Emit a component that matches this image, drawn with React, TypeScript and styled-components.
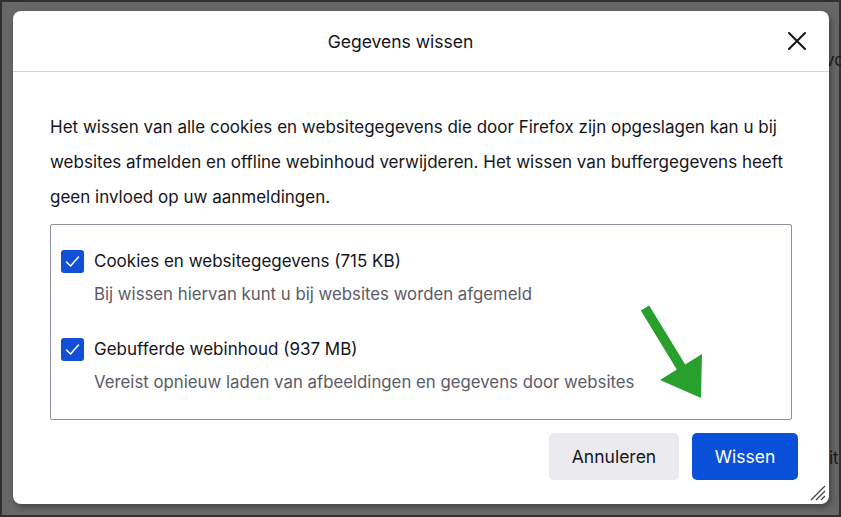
import styled, { createGlobalStyle } from 'styled-components';

const GlobalStyle = createGlobalStyle`
  html, body {
    margin: 0;
    padding: 0;
    background: #666;
  }
  * {
    box-sizing: border-box;
  }
`;

const Page = styled.div`
  position: relative;
  width: 841px;
  height: 517px;
  display: flex;
  align-items: flex-start;
  padding-left: 13px;
  background: #676767;
  box-shadow: inset 0 0 0 2px #303030;
  overflow: hidden;
  font-family: Inter, 'Liberation Sans', sans-serif;
`;

const Dialog = styled.div`
  position: relative;
  flex: 0 0 816px;
  height: 493px;
  margin-top: 11px;
  background: #fff;
  border-radius: 8px;
  box-shadow: 2px 3px 6px rgba(0, 0, 0, 0.35);
  display: flex;
  flex-direction: column;
`;

const Header = styled.div`
  flex: 0 0 61px;
  border-bottom: 1px solid #d4d4d8;
  display: grid;
  grid-template-columns: 1fr auto;
  align-items: center;
  padding: 0 17px 0 6px;
`;

const Title = styled.h1`
  margin: 0;
  font-size: 17.5px;
  font-weight: 400;
  color: #15141a;
  text-align: center;
`;

const CloseButton = styled.button`
  width: 30px;
  height: 30px;
  border: 0;
  background: none;
  padding: 0;
  display: flex;
  align-items: center;
  justify-content: center;
  color: #15141a;
`;

const Body = styled.div`
  flex: 1;
  display: flex;
  flex-direction: column;
  padding: 38px 31px 24px 37px;
`;

const Intro = styled.p`
  margin: 0 6px 9px 0;
  font-size: 17px;
  line-height: 35px;
  color: #15141a;
`;

const OptionBox = styled.div`
  border: 1px solid #8f8f9d;
  border-radius: 2px;
  margin-right: 6px;
  padding: 23px 10px 17px;
  display: flex;
  flex-direction: column;
  gap: 22px;
`;

const Option = styled.label`
  display: grid;
  grid-template-columns: 23px 1fr;
  column-gap: 10px;
  row-gap: 0;
  align-items: center;
`;

const Box = styled.span`
  width: 23px;
  height: 23px;
  border-radius: 3px;
  background: #1150d6;
  display: flex;
  align-items: center;
  justify-content: center;
`;

const Label = styled.span`
  font-size: 17px;
  line-height: 26px;
  color: #15141a;
`;

const Hint = styled.span`
  grid-column: 2;
  font-size: 16.8px;
  line-height: 40px;
  color: #5b5b66;
`;

const Footer = styled.div`
  display: flex;
  justify-content: flex-end;
  gap: 13px;
  margin-top: 13px;
`;

const Button = styled.button<{ $primary?: boolean }>`
  height: 47px;
  width: ${({ $primary }) => ($primary ? '106px' : '130px')};
  padding: 0;
  border: 0;
  border-radius: 5px;
  font-family: inherit;
  font-size: 17.5px;
  background: ${({ $primary }) => ($primary ? '#0b50d9' : '#ebebef')};
  color: ${({ $primary }) => ($primary ? '#fff' : '#15141a')};
`;

const Grip = styled.svg`
  position: absolute;
  right: 2px;
  bottom: 2px;
`;

const Backdrop = styled.div`
  flex: 1;
  align-self: stretch;
  display: flex;
  flex-direction: column;
  justify-content: space-between;
  padding: 50px 0 49px;
  overflow: hidden;
  font-size: 17px;
  line-height: 20px;
  color: #1a1a1a;
  white-space: nowrap;
`;

const Peek = styled.span<{ $shift: number }>`
  margin-left: ${({ $shift }) => $shift}px;
`;

const Arrow = styled.svg`
  position: absolute;
  left: 0;
  top: 0;
  pointer-events: none;
`;

const Check = () => (
  <Box>
    <svg width="17" height="17" viewBox="0 0 17 17">
      <polyline points="2.5,9 6.5,13 14.5,4" fill="none" stroke="#fff" strokeWidth="1.5" strokeLinecap="round" strokeLinejoin="round" />
    </svg>
  </Box>
);

const options = [
  { label: 'Cookies en websitegegevens (715 KB)', hint: 'Bij wissen hiervan kunt u bij websites worden afgemeld' },
  { label: 'Gebufferde webinhoud (937 MB)', hint: 'Vereist opnieuw laden van afbeeldingen en gegevens door websites' },
];

export default function App() {
  return (
    <>
      <GlobalStyle />
      <Page>
        <Dialog>
          <Header>
            <Title>Gegevens wissen</Title>
            <CloseButton aria-label="Sluiten">
              <svg width="20" height="20" viewBox="0 0 20 20">
                <path d="M2 2 L18 18 M18 2 L2 18" stroke="#15141a" strokeWidth="2" strokeLinecap="round" />
              </svg>
            </CloseButton>
          </Header>
          <Body>
            <Intro>
              Het wissen van alle cookies en websitegegevens die door Firefox zijn opgeslagen kan u bij websites afmelden en offline webinhoud verwijderen. Het wissen van buffergegevens heeft geen invloed op uw aanmeldingen.
            </Intro>
            <OptionBox>
              {options.map((o) => (
                <Option key={o.label}>
                  <Check />
                  <Label>{o.label}</Label>
                  <Hint>{o.hint}</Hint>
                </Option>
              ))}
            </OptionBox>
            <Footer>
              <Button>Annuleren</Button>
              <Button $primary>Wissen</Button>
            </Footer>
          </Body>
          <Grip width="20" height="20" viewBox="0 0 20 20">
            <path d="M18 4 L4 18 M18 9 L9 18 M18 14 L14 18" stroke="#444" strokeWidth="1.3" />
          </Grip>
        </Dialog>
        <Backdrop>
          <Peek $shift={-4}>vo</Peek>
          <Peek $shift={0}>it</Peek>
        </Backdrop>
        <Arrow width="841" height="517" viewBox="0 0 841 517">
          <polygon
            points="640.8,310.6 649.2,305.4 685.2,364.4 702,354 701,398 660,380 676.8,369.6"
            fill="#29a02d"
          />
        </Arrow>
      </Page>
    </>
  );
}
